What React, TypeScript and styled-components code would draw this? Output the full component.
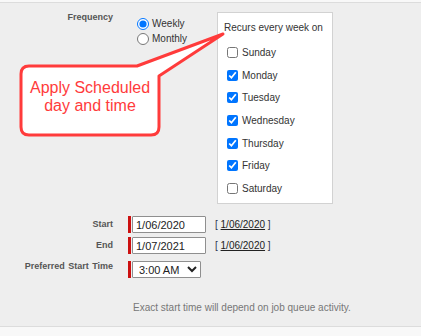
import React from "react";
import styled, { createGlobalStyle } from "styled-components";

const days = [
  { name: "Sunday", checked: false },
  { name: "Monday", checked: true },
  { name: "Tuesday", checked: true },
  { name: "Wednesday", checked: true },
  { name: "Thursday", checked: true },
  { name: "Friday", checked: true },
  { name: "Saturday", checked: false },
];

export default function App() {
  return (
    <>
      <GlobalStyle />
      <Page>
        <TopStrip />
        <Panel>
          <FieldRow $top={9} $align="start">
            <FieldLabel>Frequency</FieldLabel>
            <Controls>
              <RadioGroup>
                <RadioOption>
                  <input type="radio" name="freq" defaultChecked />
                  Weekly
                </RadioOption>
                <RadioOption>
                  <input type="radio" name="freq" />
                  Monthly
                </RadioOption>
              </RadioGroup>
              <DayBox>
                <DayHeading>Recurs every week on</DayHeading>
                <DayList>
                  {days.map((d) => (
                    <DayOption key={d.name}>
                      <input type="checkbox" defaultChecked={d.checked} />
                      {d.name}
                    </DayOption>
                  ))}
                </DayList>
              </DayBox>
            </Controls>
          </FieldRow>

          <FieldRow $top={12}>
            <FieldLabel>Start</FieldLabel>
            <Controls>
              <RequiredBar />
              <DateInput defaultValue="1/06/2020" />
              <DefaultDate>
                [ <a href="#">1/06/2020</a> ]
              </DefaultDate>
            </Controls>
          </FieldRow>

          <FieldRow $top={4}>
            <FieldLabel>End</FieldLabel>
            <Controls>
              <RequiredBar />
              <DateInput defaultValue="1/07/2021" />
              <DefaultDate>
                [ <a href="#">1/06/2020</a> ]
              </DefaultDate>
            </Controls>
          </FieldRow>

          <FieldRow $top={7}>
            <FieldLabel $lift={3}>Preferred Start Time</FieldLabel>
            <Controls>
              <RequiredBar />
              <TimeSelect defaultValue="3:00 AM">
                <option>3:00 AM</option>
              </TimeSelect>
            </Controls>
          </FieldRow>

          <FieldRow $top={24}>
            <span />
            <Note>Exact start time will depend on job queue activity.</Note>
          </FieldRow>

          <Callout>
            <svg width="210" height="110" viewBox="0 0 210 110">
              <path
                d="M 10 36 L 118 36 L 204 4 L 140 46 L 140 97 Q 140 105 132 105 L 10 105 Q 2 105 2 97 L 2 44 Q 2 36 10 36 Z"
                fill="#ffffff"
                stroke="#ff3b3b"
                strokeWidth="3"
                strokeLinejoin="round"
              />
            </svg>
            <CalloutText>
              Apply Scheduled
              <br />
              day and time
            </CalloutText>
          </Callout>
        </Panel>
        <Footer />
      </Page>
    </>
  );
}

const GlobalStyle = createGlobalStyle`
  html, body {
    margin: 0;
    padding: 0;
  }
  body {
    font-family: "Liberation Sans", Arial, sans-serif;
    background: #f8f8f8;
  }
`;

const Page = styled.div`
  width: 421px;
  height: 336px;
  display: flex;
  flex-direction: column;
  overflow: hidden;
`;

const TopStrip = styled.div`
  height: 2px;
  background: #f8f8f8;
  border-bottom: 1px solid #dcdcdc;
`;

const Panel = styled.div`
  position: relative;
  height: 324px;
  box-sizing: border-box;
  background: #eeeeee;
  border-bottom: 1px solid #dcdcdc;
  display: flex;
  flex-direction: column;
`;

const Footer = styled.div`
  flex: 1;
  background: #f8f8f8;
`;

const FieldRow = styled.div<{ $top: number; $align?: string }>`
  display: grid;
  grid-template-columns: 113px 1fr;
  column-gap: 15px;
  margin-top: ${(p) => p.$top}px;
  align-items: ${(p) => p.$align || "center"};
`;

const FieldLabel = styled.div<{ $lift?: number }>`
  text-align: right;
  font-size: 9px;
  font-weight: bold;
  line-height: 11px;
  color: #555;
  word-spacing: 1px;
  white-space: nowrap;
  margin-bottom: ${(p) => (p.$lift || 0) * 2}px;
`;

const Controls = styled.div`
  display: flex;
  align-items: flex-start;
`;

const RadioGroup = styled.div`
  margin-left: 9px;
  width: 80px;
  padding-top: 4px;
  display: flex;
  flex-direction: column;
`;

const RadioOption = styled.label`
  height: 15px;
  display: flex;
  align-items: center;
  gap: 3px;
  font-size: 10px;
  color: #333;

  & input {
    width: 12px;
    height: 12px;
    margin: 0;
  }
`;

const DayBox = styled.div`
  width: 116px;
  height: 192px;
  box-sizing: border-box;
  background: #fff;
  border: 1px solid #d2d2d2;
  padding: 8px 0 0 6px;
`;

const DayHeading = styled.div`
  font-size: 10px;
  line-height: 14px;
  color: #333;
  white-space: nowrap;
`;

const DayList = styled.div`
  margin-top: 6px;
  padding-left: 3px;
  display: flex;
  flex-direction: column;
`;

const DayOption = styled.label`
  height: 22.7px;
  display: flex;
  align-items: center;
  gap: 4px;
  font-size: 10px;
  color: #333;

  & input {
    width: 11px;
    height: 11px;
    margin: 0;
  }
`;

const RequiredBar = styled.span`
  width: 3px;
  height: 17px;
  background: #cc1010;
  margin-right: 1px;
`;

const DateInput = styled.input`
  width: 74px;
  height: 17px;
  box-sizing: border-box;
  border: 1px solid #8f8f8f;
  border-radius: 1px;
  padding: 0 3px;
  font-family: "Liberation Sans", Arial, sans-serif;
  font-size: 11px;
  color: #222;
  background: #fff;
  outline: none;
`;

const DefaultDate = styled.span`
  margin-left: 9px;
  font-size: 10px;
  line-height: 17px;
  color: #2a3550;

  & a {
    color: #222;
    text-decoration: underline;
  }
`;

const TimeSelect = styled.select`
  width: 69px;
  height: 17px;
  box-sizing: border-box;
  border: 1px solid #8f8f8f;
  border-radius: 1px;
  padding: 0 0 0 2px;
  font-family: "Liberation Sans", Arial, sans-serif;
  font-size: 11px;
  color: #222;
  background: #fff;
`;

const Note = styled.div`
  margin-left: 5px;
  font-size: 10px;
  line-height: 12px;
  color: #777;
  white-space: nowrap;
`;

const Callout = styled.div`
  position: absolute;
  left: 19px;
  top: 27px;
  width: 210px;
  height: 110px;

  & svg {
    display: block;
  }
`;

const CalloutText = styled.div`
  position: absolute;
  left: 2px;
  top: 49px;
  width: 138px;
  text-align: center;
  font-size: 16px;
  line-height: 18px;
  color: #ff3b3b;
`;
